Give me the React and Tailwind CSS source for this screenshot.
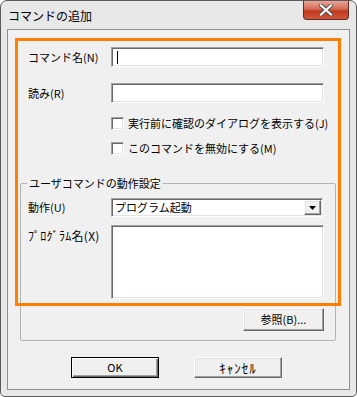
import React from 'react';

const sunken = "bg-white border border-t-[#a0a0a0] border-l-[#a0a0a0] border-b-white border-r-white shadow-[inset_1px_1px_0_#696969,inset_-1px_-1px_0_#e3e3e3]";
const raised = "bg-[#f0f0f0] border border-t-white border-l-white border-b-[#696969] border-r-[#696969] shadow-[inset_-1px_-1px_0_#a0a0a0,inset_1px_1px_0_#e3e3e3]";

const Row = ({ label, children, className = "" }) => (
  <div className={`flex items-center ${className}`}>
    <span className="w-[83px] shrink-0">{label}</span>
    {children}
  </div>
);

const Check = ({ label, className = "" }) => (
  <div className={`flex items-center h-[13px] ml-[103px] gap-[4px] ${className}`}>
    <span className={`w-[13px] h-[13px] shrink-0 ${sunken}`}></span>
    <span className="whitespace-nowrap">{label}</span>
  </div>
);

const CloseButton = () => (
  <div className="mr-[7px] w-[46px] h-[19px] rounded-b-[4px] border border-t-0 border-[#5b2c22] bg-[linear-gradient(#e9a595,#d46a55_45%,#c0391f_55%,#d0573d)] flex items-center justify-center">
    <svg width="14" height="12" viewBox="0 0 14 12">
      <path d="M2 1.5 L12 10.5 M12 1.5 L2 10.5" stroke="#4a4a4a" strokeWidth="4" strokeLinecap="square" />
      <path d="M2 1.5 L12 10.5 M12 1.5 L2 10.5" stroke="#ffffff" strokeWidth="2.2" strokeLinecap="square" />
    </svg>
  </div>
);

const App = () => {
  return (
    <div className="w-[357px] h-[397px] bg-[#e8e8e8] border border-[#5a5a5a] rounded-t-[7px] rounded-b-[5px] flex flex-col overflow-hidden text-[11px] leading-[13px] text-black font-['Noto_Sans_CJK_JP','Noto_Sans',sans-serif]">
      <div className="h-[28px] shrink-0 flex justify-between items-start">
        <span className="pl-[7px] pt-[7px] text-[12px] leading-[15px]">コマンドの追加</span>
        <CloseButton />
      </div>

      <div className="relative mx-[6px] h-[361px] border border-[#8e8f8f] bg-[#f0f0f0]">
        <div className="ml-[20px]">
          <Row label="コマンド名(N)" className="mt-[17px]">
            <div className={`w-[213px] h-[20px] pl-[5px] flex items-center ${sunken}`}>
              <span className="w-px h-[13px] bg-black"></span>
            </div>
          </Row>
          <Row label="読み(R)" className="mt-[16px]">
            <div className={`w-[213px] h-[20px] ${sunken}`}></div>
          </Row>
        </div>

        <Check label="実行前に確認のダイアログを表示する(J)" className="mt-[14px]" />
        <Check label="このコマンドを無効にする(M)" className="mt-[12px]" />

        <div className="relative ml-[12px] mt-[28px] w-[316px] h-[158px] border border-[#b4b4b4] rounded-[2px] pl-[7px]">
          <span className="absolute -top-[7px] left-[6px] px-[2px] bg-[#f0f0f0] whitespace-nowrap">ユーザコマンドの動作設定</span>
          <Row label="動作(U)" className="mt-[14px]">
            <div className={`w-[212px] h-[19px] flex items-center justify-between pl-[3px] pr-[1px] ${sunken}`}>
              <span>プログラム起動</span>
              <span className={`w-[17px] h-[15px] flex items-center justify-center ${raised}`}>
                <svg width="7" height="4" viewBox="0 0 7 4"><path d="M0 0 H7 L3.5 4 Z" fill="#000" /></svg>
              </span>
            </div>
          </Row>
          <div className="flex items-start mt-[8px]">
            <span className="w-[83px] shrink-0 pt-[4px] text-[12px] tracking-[0.3px]">ﾌﾟﾛｸﾞﾗﾑ名(X)</span>
            <div className={`w-[213px] h-[74px] ${sunken}`}></div>
          </div>
          <div className="mt-[9px] ml-[215px]">
            <button className={`w-[81px] h-[23px] ${raised}`}>参照(B)...</button>
          </div>
        </div>

        <div className="flex mt-[16px] ml-[63px] gap-[35px]">
          <button className="w-[88px] h-[21px] bg-[#f0f0f0] border border-black shadow-[inset_1px_1px_0_#ffffff,inset_-1px_-1px_0_#696969,inset_-2px_-2px_0_#a0a0a0]">OK</button>
          <button className={`w-[88px] h-[21px] text-[13px] tracking-[1px] ${raised}`}>ｷｬﾝｾﾙ</button>
        </div>

        <div className="absolute left-[7px] top-[8px] w-[326px] h-[268px] border-[3px] border-[#ff8000] pointer-events-none"></div>
      </div>
    </div>
  );
};

export default App;
